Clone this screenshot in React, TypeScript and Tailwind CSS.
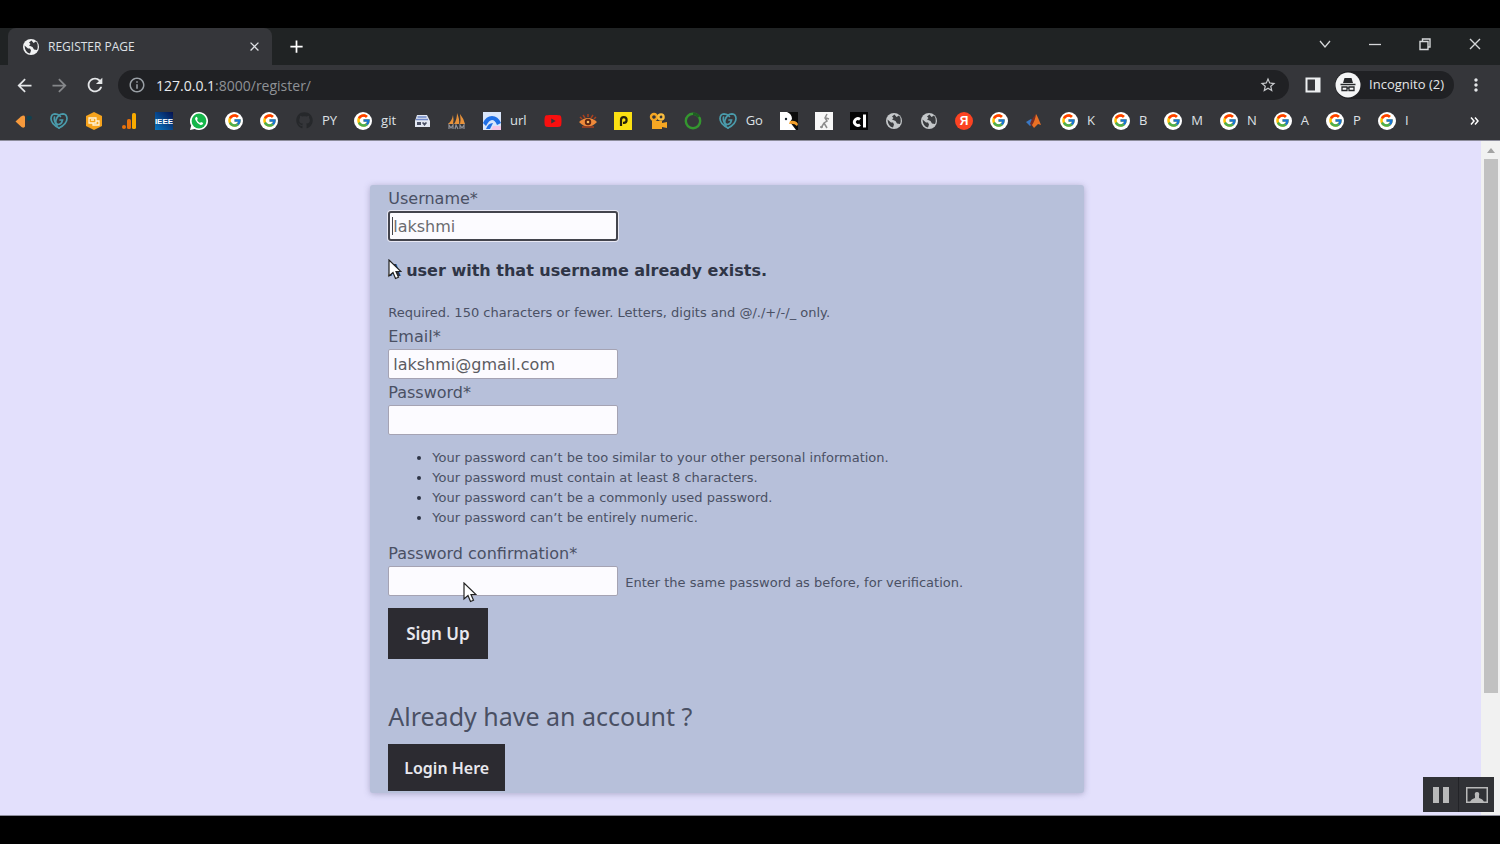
import React from "react";
import { FcGoogle } from "react-icons/fc";
import { FaGithub, FaWhatsapp, FaYoutube } from "react-icons/fa";
import { MdPublic, MdArrowBack, MdArrowForward, MdRefresh, MdInfoOutline, MdStarBorder, MdMoreVert, MdClose, MdAdd } from "react-icons/md";

const Google = () => (
  <span className="flex size-[18px] items-center justify-center rounded-full bg-white">
    <FcGoogle size={15} />
  </span>
);

const Globe = () => (
  <svg width="18" height="18" viewBox="0 0 18 18">
    <circle cx="9" cy="9" r="8" fill="#c4c7c9" />
    <path d="M2.500 7.500 6 10.500h2l1 2-1 3q-5-1-5.500-8Zm7-5L7 4.500 8.500 6 7 7.500l3.500 1.500 1.500 2.500 3 .5q2-5-1-8.500L11.500 5Z" fill="#3a3c3f" />
  </svg>
);

const GoDaddy = () => (
  <svg width="18" height="18" viewBox="0 0 18 18">
    <g fill="none" stroke="#4a9bab" strokeWidth="1.7" strokeLinecap="round">
      <path d="M9 16Q1 12 1 6.500 1.200 2 5 1.800 8 1.800 10.500 4.500" />
      <path d="M9 16q8-4 8-9.500-.2-4.500-4-4.700Q8 1.800 6 8q-1 4 2.200 4.500 3.300 0 4.300-4.500H10" />
      <path d="M4.500 5Q3.500 9 7 13.500" />
    </g>
  </svg>
);

const Arrowhead = () => (
  <svg width="18" height="18" viewBox="0 0 18 18">
    <path d="M.5 9.500 6 4.500q3-2 4 0v10q-1 2-3.500.5Z" fill="#f79a3c" />
    <path d="M12 4q3-1 5 1 0 3-4 4-2-2-1-5Z" fill="#12414f" />
  </svg>
);

const Hexagon = () => (
  <svg width="18" height="18" viewBox="0 0 18 18">
    <path d="m9 0 8 4v10l-8 4-8-4V4Z" fill="#f6a31c" />
    <path d="M4 6h7v5H4Zm7 3h3v4H8v-2M6 8h3" fill="none" stroke="#fff3d6" strokeWidth="1.3" />
  </svg>
);

const Analytics = () => (
  <svg width="18" height="18" viewBox="0 0 18 18">
    <circle cx="4" cy="15" r="2" fill="#e8710a" />
    <rect x="7" y="7" width="4" height="10" rx="1.6" fill="#e8710a" />
    <rect x="12" y="1" width="4" height="16" rx="1.6" fill="#f9ab00" />
  </svg>
);

const Ieee = () => (
  <svg width="18" height="18" viewBox="0 0 18 18">
    <defs>
      <linearGradient id="ieee" x1="0" y1="1" x2="1" y2="0">
        <stop offset="0" stopColor="#0878c4" />
        <stop offset="1" stopColor="#06124f" />
      </linearGradient>
    </defs>
    <rect width="18" height="18" fill="url(#ieee)" />
    <text x="9" y="12" textAnchor="middle" fontSize="8" fontWeight="700" fontFamily="Liberation Sans, sans-serif" fill="#fff">IEEE</text>
  </svg>
);

const WhatsApp = () => (
  <svg width="18" height="18" viewBox="0 0 18 18">
    <path d="M9 0a9 9 0 1 1-4.300 16.900L0 18l1.200-4.500A9 9 0 0 1 9 0Z" fill="#fff" />
    <circle cx="9" cy="9" r="7.400" fill="#16b64a" />
    <path d="M6.300 4.800q-1.800 1-1 3 1.700 4 5.200 5.200 2.300.3 2.800-2L11 9.900l-1 1.100Q8 10.200 7 8l.8-1L7 4.900Z" fill="#fff" />
  </svg>
);

const Store = () => (
  <svg width="18" height="18" viewBox="0 0 18 18">
    <path d="M4 3h10l3 6v6H2V9Z" fill="#e3e8f2" />
    <path d="M4.500 5h9M3 7.500h12" stroke="#6f88c8" strokeWidth="1.4" />
    <path d="M4 10h4v3H4Zm6 0 1.500 1L13 10l1 1-2.500 3-2.500-3Z" fill="#4a5064" />
  </svg>
);

const Sails = () => (
  <svg width="18" height="18" viewBox="0 0 18 18">
    <path d="M0 12q4-3 5-9 1 5 0 9Zm6 0q3-4 3-11 3 7 2 11Zm6 0q1-4 0-10 4 5 5 10Z" fill="#e8923a" />
    <path d="M1 17v-4l2 3 2-3v4m2 0 1-4 2 4m2 0v-4l2 3 2-3v4" fill="none" stroke="#8d8f96" strokeWidth="1.2" />
  </svg>
);

const Meter = () => (
  <svg width="18" height="18" viewBox="0 0 18 18">
    <rect width="18" height="18" fill="#d9e6fb" />
    <path d="M0 11q3-7 9-7t9 7l-4 2q-2-5-5-5t-6 6Z" fill="#1f6fe5" />
    <path d="M3 17q2-6 7-6l-3 6Z" fill="#1f6fe5" />
    <path d="M10 14h8v4H8Z" fill="#f5c7e6" />
  </svg>
);

const Eye = () => (
  <svg width="18" height="18" viewBox="0 0 18 18">
    <path d="M0 10q9-8 18 0-9 9-18 0Z" fill="#ef8a3a" />
    <circle cx="9" cy="10" r="3.2" fill="#5b2413" />
    <circle cx="9" cy="10" r="1.3" fill="#f6bb62" />
    <path d="M1 5l2 2M4 3l2 3M9 2v3M14 3l-2 3M17 5l-2 2M3 15h12" stroke="#a8401f" strokeWidth="1.5" />
  </svg>
);

const YellowP = () => (
  <svg width="18" height="18" viewBox="0 0 18 18">
    <rect width="18" height="18" fill="#fbe012" />
    <path d="M7 14V8a2.8 2.8 0 1 1 2.8 2.8H9" fill="none" stroke="#26220c" strokeWidth="2.2" />
  </svg>
);

const Camera = () => (
  <svg width="18" height="18" viewBox="0 0 18 18">
    <circle cx="5" cy="5" r="3" fill="none" stroke="#f5a623" strokeWidth="2.4" />
    <circle cx="12" cy="5" r="2.6" fill="none" stroke="#f9bd3f" strokeWidth="2.4" />
    <path d="M3 9h10v2l5-1v6l-5-1v2H3Z" fill="#f5a623" />
  </svg>
);

const Ring = () => (
  <svg width="18" height="18" viewBox="0 0 18 18">
    <circle cx="9" cy="9" r="7.2" fill="none" stroke="#34962f" strokeWidth="2.4" />
    <path d="M9 1.8A7 7 0 0 1 15 5" fill="none" stroke="#1f5d22" strokeWidth="2.4" />
  </svg>
);

const Bird = () => (
  <svg width="18" height="18" viewBox="0 0 18 18">
    <rect width="18" height="18" fill="#0c0c0c" />
    <path d="M0 0h7q5 2 5 7l-2 3 6 8H0Z" fill="#fff" />
    <path d="M10 9q6-1 8 3l-1 2q-3-3-8-2Z" fill="#f3a02c" />
    <circle cx="6" cy="7" r="1.2" fill="#16202a" />
  </svg>
);

const Sketch = () => (
  <svg width="18" height="18" viewBox="0 0 18 18">
    <rect width="18" height="18" fill="#f7f7f7" />
    <path d="M12 2l-2 4 2 3-3 2-3 5M11 6l3 1M9 11l3 5M5 15h3" fill="none" stroke="#8d8d8d" strokeWidth="1.5" />
  </svg>
);

const Cl = () => (
  <svg width="18" height="18" viewBox="0 0 18 18">
    <rect width="18" height="18" fill="#050505" />
    <path d="M10 7.400a3.400 3.400 0 1 0 0 5.200" fill="none" stroke="#fff" strokeWidth="2.800" />
    <path d="M14.500 2.500v13" stroke="#fff" strokeWidth="3" />
  </svg>
);

const Yandex = () => (
  <svg width="18" height="18" viewBox="0 0 18 18">
    <circle cx="9" cy="9" r="9" fill="#fb4322" />
    <text x="9" y="13" textAnchor="middle" fontSize="12" fontWeight="700" fontFamily="Liberation Sans, sans-serif" fill="#fff">Я</text>
  </svg>
);

const Matlab = () => (
  <svg width="18" height="18" viewBox="0 0 18 18">
    <path d="m1 10 5-3 3 3-4 4Z" fill="#3a78c3" />
    <path d="M6 9q3-5 5-7l-3 13-3-3Z" fill="#7b2c22" />
    <path d="M11 2q2 3 5 11l-3-1-4 4-2-3q3-4 4-11Z" fill="#ea7125" />
  </svg>
);

const bookmarks: { icon: React.FC; title: string; label?: string }[] = [
  { icon: Arrowhead, title: "Arrowhead" },
  { icon: GoDaddy, title: "GoDaddy" },
  { icon: Hexagon, title: "Hexagon" },
  { icon: Analytics, title: "Analytics" },
  { icon: Ieee, title: "Library" },
  { icon: WhatsApp, title: "WhatsApp" },
  { icon: Google, title: "Google" },
  { icon: Google, title: "Google" },
  { icon: () => <FaGithub size={17} className="text-[#26282b]" />, title: "GitHub", label: "PY" },
  { icon: Google, title: "Google", label: "git" },
  { icon: Store, title: "Store" },
  { icon: Sails, title: "Sails" },
  { icon: Meter, title: "Meter", label: "url" },
  { icon: () => <FaYoutube size={18} className="text-[#f80f0f]" />, title: "YouTube" },
  { icon: Eye, title: "Eye" },
  { icon: YellowP, title: "Yellow" },
  { icon: Camera, title: "Camera" },
  { icon: Ring, title: "Ring" },
  { icon: GoDaddy, title: "GoDaddy", label: "Go" },
  { icon: Bird, title: "Bird" },
  { icon: Sketch, title: "Sketch" },
  { icon: Cl, title: "Classics" },
  { icon: Globe, title: "Site" },
  { icon: Globe, title: "Site" },
  { icon: Yandex, title: "Yandex" },
  { icon: Google, title: "Google" },
  { icon: Matlab, title: "Matlab" },
  { icon: Google, title: "Google", label: "K" },
  { icon: Google, title: "Google", label: "B" },
  { icon: Google, title: "Google", label: "M" },
  { icon: Google, title: "Google", label: "N" },
  { icon: Google, title: "Google", label: "A" },
  { icon: Google, title: "Google", label: "P" },
  { icon: Google, title: "Google", label: "I" },
];

function TabStrip() {
  return (
    <div className="flex h-[37px] items-stretch bg-[#202324]">
      <div className="ml-2 flex w-[264px] items-center rounded-t-lg bg-[#35363a] pr-2.5 pl-3.5 text-[#dfe1e5]">
        <svg width="18" height="18" viewBox="0 0 18 18">
          <circle cx="9" cy="9" r="8" fill="#f1f2f3" />
          <path d="M2.500 7.500 6 10.500h2l1 2-1 3q-5-1-5.500-8Zm7-5L7 4.500 8.500 6 7 7.500l3.500 1.500 1.500 2.500 3 .5q2-5-1-8.500L11.500 5Z" fill="#35363a" />
        </svg>
        <span className="ml-2 flex-1 text-[12px]">REGISTER PAGE</span>
        <button aria-label="Close tab"><MdClose size={15} /></button>
      </div>
      <button aria-label="New tab" className="ml-3.5 text-white"><MdAdd size={21} /></button>
      <div className="ml-auto flex items-center gap-9 pr-[18px] pb-1.5 text-[#d5d7d9]">
        <button aria-label="Search tabs">
          <svg width="14" height="14" viewBox="0 0 14 14"><path d="m2 4 5 6 5-6" fill="none" stroke="currentColor" strokeWidth="1.3" /></svg>
        </button>
        <button aria-label="Minimize">
          <svg width="14" height="14" viewBox="0 0 14 14"><path d="M1 7.500h12" stroke="currentColor" strokeWidth="1.3" /></svg>
        </button>
        <button aria-label="Restore">
          <svg width="14" height="14" viewBox="0 0 14 14"><path d="M2 4.500h8v8H2Zm2.500-.5V2H12v8h-1.500" fill="none" stroke="currentColor" strokeWidth="1.4" /></svg>
        </button>
        <button aria-label="Close window">
          <svg width="14" height="14" viewBox="0 0 14 14"><path d="m2 2 10 10M12 2 2 12" stroke="currentColor" strokeWidth="1.4" /></svg>
        </button>
      </div>
    </div>
  );
}

function Toolbar() {
  return (
    <div className="flex h-10 items-center bg-[#35363a] pr-3.5 pl-3.5 text-[#e4e6e8]">
      <button aria-label="Back"><MdArrowBack size={21} /></button>
      <button aria-label="Forward" className="ml-3.5 text-[#85878a]"><MdArrowForward size={21} /></button>
      <button aria-label="Reload" className="ml-3.5"><MdRefresh size={22} /></button>
      <div className="ml-3 flex h-[30px] flex-1 items-center rounded-full bg-[#202124] pr-3 pl-2.5 text-[14px]">
        <MdInfoOutline size={18} className="text-[#9aa0a6]" />
        <span className="ml-2.5 flex-1 text-[#8f9296]"><span className="text-[#e8eaed]">127.0.0.1</span>:8000/register/</span>
        <button aria-label="Bookmark this page"><MdStarBorder size={18} className="text-[#c8cacd]" /></button>
      </div>
      <button aria-label="Side panel" className="ml-4">
        <svg width="16" height="16" viewBox="0 0 16 16"><path d="M1.500 1.500h13v13h-13Z" fill="none" stroke="#eef0f1" strokeWidth="2" /><path d="M10 1h5v14h-5Z" fill="#eef0f1" /></svg>
      </button>
      <button className="ml-3.5 flex h-7 items-center gap-2 rounded-full bg-[#202124] pr-2.5 text-[13px]">
        <svg width="26" height="26" viewBox="0 0 26 26">
          <circle cx="13" cy="13" r="12.500" fill="#f4f5f6" />
          <path d="M9.500 6h7l1.500 5H8Z" fill="#26282b" />
          <path d="M5.500 12.500h15" stroke="#26282b" strokeWidth="1.500" />
          <path d="M7 15h5v3.500H7Zm7 0h5v3.500h-5Zm-2 1h2" fill="none" stroke="#26282b" strokeWidth="1.300" />
        </svg>
        Incognito (2)
      </button>
      <button aria-label="Menu" className="ml-3"><MdMoreVert size={20} /></button>
    </div>
  );
}

function Bookmarks() {
  return (
    <nav aria-label="Bookmarks" className="flex h-[35px] items-center gap-[17px] overflow-hidden bg-[#35363a] pr-5 pb-1 pl-[15px] text-[13px] text-[#dfe1e5]">
      {bookmarks.map(({ icon: Icon, title, label }, i) => (
        <a key={i} href="#" aria-label={label ?? title} className="flex shrink-0 items-center gap-[9px]">
          <span className="flex size-[18px] items-center justify-center"><Icon /></span>
          {label && <span>{label}</span>}
        </a>
      ))}
      <button aria-label="More bookmarks" className="ml-auto">
        <svg width="10" height="10" viewBox="0 0 10 10"><path d="m1 1.500 3 3.500-3 3.500m4-7L8 5 5 8.500" fill="none" stroke="#fff" strokeWidth="1.500" /></svg>
      </button>
    </nav>
  );
}

const Pointer = () => (
  <svg width="14" height="21" viewBox="0 0 14 21">
    <path d="M1 1v16l4-3.500 2.500 6 3-1.300L8 12.500h5Z" fill="#fff" stroke="#222" strokeWidth="1.200" />
  </svg>
);

const inputBox = "block h-[30px] w-[230px] rounded-[2px] border border-[#a5a3b3] bg-[#fcfbff] px-1 text-[16px] text-[#5b5b62] outline-none";
const labelBox = "block w-fit pt-0.5 text-[16px] leading-6";

function RegisterForm() {
  return (
    <section className="mt-11 mb-[22px] ml-[25%] w-full max-w-[714px] rounded-[3px] bg-[#b7c0da] px-[18px] pb-0.5 font-['DejaVu_Sans',Verdana,sans-serif] text-[#4a5064] shadow-[0_1px_6px_rgba(90,90,130,0.4)]">
      <form onSubmit={(e) => e.preventDefault()}>
        <label htmlFor="username" className={labelBox}>Username*</label>
        <div className="relative w-fit">
          <input id="username" defaultValue="lakshmi" className="block h-[30px] w-[230px] rounded-[3px] border-2 border-[#43444d] bg-[#fcfbff] px-[3px] text-[16px] text-[#6b6b70] ring-1 ring-[#e8e8f4] outline-none" />
          <span className="absolute top-1.5 left-1 h-[18px] w-px bg-[#44444a]" />
        </div>
        <div className="relative mt-4">
          <p className="pt-0.5 text-[16px] leading-6 font-bold text-[#2f3546]">A user with that username already exists.</p>
          <span className="absolute top-0.5 left-0"><Pointer /></span>
        </div>
        <p className="mt-5 text-[13px] leading-5">Required. 150 characters or fewer. Letters, digits and @/./+/-/_ only.</p>
        <label htmlFor="email" className={labelBox}>Email*</label>
        <input id="email" type="text" defaultValue="lakshmi@gmail.com" className={inputBox} />
        <label htmlFor="password" className={labelBox}>Password*</label>
        <input id="password" type="password" className={inputBox} />
        <ul className="mt-[13px] list-disc pl-11 text-[13px] leading-5 marker:text-[#2f3546]">
          <li>Your password can’t be too similar to your other personal information.</li>
          <li>Your password must contain at least 8 characters.</li>
          <li>Your password can’t be a commonly used password.</li>
          <li>Your password can’t be entirely numeric.</li>
        </ul>
        <label htmlFor="confirm" className={`${labelBox} mt-3`}>Password confirmation*</label>
        <div className="relative flex items-center gap-[7px]">
          <input id="confirm" type="password" className={inputBox} />
          <span className="pt-1 text-[13px] leading-5">Enter the same password as before, for verification.</span>
          <span className="absolute top-4 left-[75px]"><Pointer /></span>
        </div>
        <button className="mt-3 block h-[51px] bg-[#2c2b31] px-[18px] font-['Noto_Sans',sans-serif] text-[17px] font-semibold text-[#e8e8ee]">Sign Up</button>
      </form>
      <h2 className="mt-[39px] font-['Noto_Sans',sans-serif] text-[25px] leading-9">Already have an account ?</h2>
      <button className="mt-2.5 block h-[47px] bg-[#2c2b31] px-4 font-['Noto_Sans',sans-serif] text-[16px] font-semibold text-[#e8e8ee]">Login Here</button>
    </section>
  );
}

export default function App() {
  return (
    <div className="relative flex min-h-screen flex-col bg-black font-['Open_Sans','Noto_Sans',sans-serif]">
      <header className="pt-7">
        <TabStrip />
        <Toolbar />
        <Bookmarks />
      </header>
      <main className="mb-7 flex flex-1 border-y border-[#8e8e9c] bg-[#e3e0fc]">
        <div className="min-w-0 flex-1">
          <RegisterForm />
        </div>
        <div className="flex w-[19px] flex-col items-center bg-[#f1f1f1]">
          <svg width="18" height="18" viewBox="0 0 18 18"><path d="m5 12 4-5 4 5Z" fill="#a3a3a3" /></svg>
          <div className="h-[534px] w-3.5 bg-[#c1c1c1]" />
        </div>
      </main>
      <div className="absolute right-1.5 bottom-8 flex h-[35px] w-[71px] bg-[#313236] text-[#b9b9b9]">
        <button aria-label="Pause" className="flex flex-1 items-center justify-center border-r border-[#222327]">
          <svg width="16" height="16" viewBox="0 0 16 16"><path d="M0 0h6v16H0Zm10 0h6v16h-6Z" fill="currentColor" /></svg>
        </button>
        <button aria-label="Webcam" className="flex flex-1 items-center justify-center">
          <svg width="22" height="16" viewBox="0 0 22 16">
            <path d="M.75.75h20.500v14.500H.75Z" fill="none" stroke="currentColor" strokeWidth="1.500" />
            <path d="M4 15q1-3 5-4V9q-1-4 2-4t2 4v2q4 1 5 4Z" fill="currentColor" />
          </svg>
        </button>
      </div>
    </div>
  );
}
